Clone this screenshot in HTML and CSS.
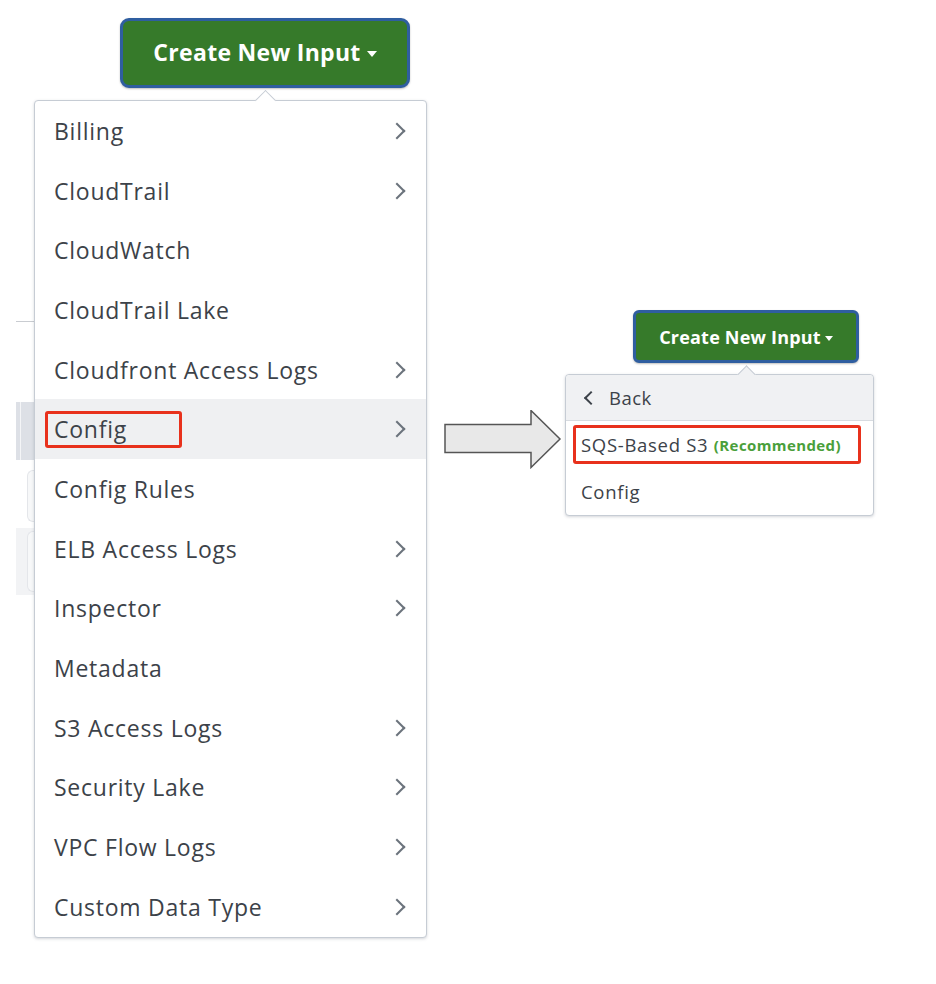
FILE: index.html
```html
<!DOCTYPE html>
<html>
<head>
<meta charset="utf-8">
<link rel="stylesheet" href="styles.css">
</head>
<body>
<div class="page">
  <div class="bg-strip">
    <div class="bg-line"></div>
    <div class="bg-row bg-row-active"><span class="bg-bar"></span></div>
    <div class="bg-row bg-row-card"><span class="bg-curve"></span></div>
    <div class="bg-row bg-row-gray"><span class="bg-curve"></span></div>
  </div>

  <div class="left">
    <div class="btn-wrap btn-wrap-lg">
      <button class="btn btn-lg">Create New Input<span class="caret"></span></button>
    </div>
    <div class="menu menu-lg">
      <div class="item">Billing<span class="chev"></span></div>
      <div class="item">CloudTrail<span class="chev"></span></div>
      <div class="item">CloudWatch</div>
      <div class="item">CloudTrail Lake</div>
      <div class="item">Cloudfront Access Logs<span class="chev"></span></div>
      <div class="item item-active"><span class="hl hl-lg">Config</span><span class="chev"></span></div>
      <div class="item">Config Rules</div>
      <div class="item">ELB Access Logs<span class="chev"></span></div>
      <div class="item">Inspector<span class="chev"></span></div>
      <div class="item">Metadata</div>
      <div class="item">S3 Access Logs<span class="chev"></span></div>
      <div class="item">Security Lake<span class="chev"></span></div>
      <div class="item">VPC Flow Logs<span class="chev"></span></div>
      <div class="item">Custom Data Type<span class="chev"></span></div>
    </div>
  </div>

  <svg class="arrow" width="120" height="60" viewBox="0 0 120 60">
    <polygon points="1,14.5 87,14.5 87,0.5 116,29 87,57.5 87,42.5 1,42.5" fill="#e8e8e8" stroke="#555" stroke-width="1.5" stroke-linejoin="miter"/>
  </svg>

  <div class="right">
    <div class="btn-wrap btn-wrap-sm">
      <button class="btn btn-sm">Create New Input<span class="caret caret-sm"></span></button>
    </div>
    <div class="menu menu-sm">
      <div class="back"><span class="chev-left"></span>Back</div>
      <div class="sm-item"><span class="hl hl-sm">SQS-Based S3 <b class="rec">(Recommended)</b></span></div>
      <div class="sm-item">Config</div>
    </div>
  </div>
</div>
</body>
</html>
```
FILE: styles.css
```css
* { box-sizing: border-box; }
html, body { margin: 0; padding: 0; background: #fff; }
body { font-family: "Open Sans", Lato, sans-serif; color: #3c4249; }

.page {
  display: flex;
  align-items: flex-start;
  padding: 18px 0 0 16px;
  width: 936px;
  height: 984px;
}

/* faint background remnants on the far left */
.bg-strip {
  width: 18px;
  display: flex;
  flex-direction: column;
  margin-top: 303px;
}
.bg-line { height: 1px; background: #c9ccd1; }
.bg-row { position: relative; }
.bg-row-active {
  margin-top: 80px;
  height: 58px;
  background: #dde0e6;
}
.bg-bar {
  position: absolute;
  left: 4px; top: 0; bottom: 0;
  width: 1px;
  background: #f4f5f7;
}
.bg-row-card {
  margin-top: 7px;
  height: 58px;
  background: #fff;
}
.bg-row-gray {
  margin-top: 3px;
  height: 67px;
  background: #f2f3f5;
}
.bg-curve {
  position: absolute;
  right: 0; top: 3px; bottom: 3px;
  width: 7px;
  border: 1px solid #e4e6ea;
  border-right: none;
  border-radius: 6px 0 0 6px;
  background: #f7f8f9;
}

/* left group */
.left { width: 393px; display: flex; flex-direction: column; }
.btn-wrap { display: flex; }
.btn-wrap-lg { padding-left: 86px; }
.btn {
  font-family: "Open Sans", Lato, sans-serif;
  font-weight: 700;
  color: #fff;
  background: #367a2a;
  border: 3px solid #2f5ea0;
  display: flex;
  align-items: center;
  justify-content: center;
  box-shadow: 0 1px 2px rgba(0,0,0,0.25);
  cursor: pointer;
}
.btn-lg {
  width: 290px;
  height: 70px;
  border-radius: 9px;
  font-size: 23px;
  letter-spacing: 0.3px;
  padding: 0 0 2px 0;
}
.caret {
  display: inline-block;
  width: 0; height: 0;
  border-left: 5.5px solid transparent;
  border-right: 5.5px solid transparent;
  border-top: 6px solid #fff;
  margin-left: 6px;
  margin-top: 3px;
}
.caret-sm {
  border-left-width: 4.5px;
  border-right-width: 4.5px;
  border-top-width: 5px;
  margin-left: 4px;
}

.menu {
  position: relative;
  background: #fff;
  border: 1px solid #c6ccd4;
  border-radius: 4px;
  box-shadow: 0 1px 3px rgba(60,70,85,0.22);
}
.menu::before {
  content: "";
  position: absolute;
  top: -8px;
  width: 14px;
  height: 14px;
  background: #fff;
  border-left: 1px solid #c6ccd4;
  border-top: 1px solid #c6ccd4;
  transform: rotate(45deg);
}
.menu-lg { margin-top: 12px; width: 393px; }
.menu-lg::before { left: 223px; }

.item {
  height: 59.7px;
  display: flex;
  align-items: center;
  justify-content: space-between;
  padding: 0 19px 0 19px;
  font-size: 23px;
  letter-spacing: 0.75px;
  position: relative;
}
.item-active { background: #eff0f2; }
.chev {
  width: 12px; height: 12px;
  border-right: 2px solid #6b737c;
  border-top: 2px solid #6b737c;
  transform: rotate(45deg);
  margin-right: 4px;
}
.hl {
  border: 3px solid #e8311c;
  border-radius: 3px;
}
.hl-lg {
  margin-left: -9px;
  width: 137px;
  height: 37px;
  padding-left: 6px;
  display: flex;
  align-items: center;
}

.arrow { margin: 392px 0 0 17px; flex: none; }

/* right group */
.right { margin-left: 1px; margin-top: 292px; width: 309px; display: flex; flex-direction: column; }
.btn-wrap-sm { padding-left: 68px; }
.btn-sm {
  width: 226px;
  height: 53px;
  border-radius: 6px;
  font-size: 18px;
  letter-spacing: 0.2px;
  padding-bottom: 1px;
}
.menu-sm { margin-top: 11px; width: 309px; }
.menu-sm::before { left: 174px; width: 12px; height: 12px; top: -7px; background: #f0f1f3; }
.back {
  height: 46px;
  background: #f0f1f3;
  border-bottom: 1px solid #d7dbe0;
  display: flex;
  align-items: center;
  padding-left: 20px;
  font-size: 18.5px;
  letter-spacing: 0.5px;
  border-radius: 4px 4px 0 0;
  position: relative;
}
.chev-left {
  width: 10px; height: 10px;
  border-left: 2px solid #3c4249;
  border-bottom: 2px solid #3c4249;
  transform: rotate(45deg);
  margin-right: 13px;
}
.sm-item {
  height: 47px;
  display: flex;
  align-items: center;
  padding-left: 7px;
  font-size: 18.5px;
  letter-spacing: 0.7px;
}
.sm-item + .sm-item { padding-left: 15px; }
.hl-sm {
  width: 288px;
  height: 39px;
  display: flex;
  align-items: center;
  padding-left: 5px;
  white-space: pre;
}
.rec { color: #4a9f3b; font-size: 15px; font-weight: 700; letter-spacing: 0.4px; }
```
